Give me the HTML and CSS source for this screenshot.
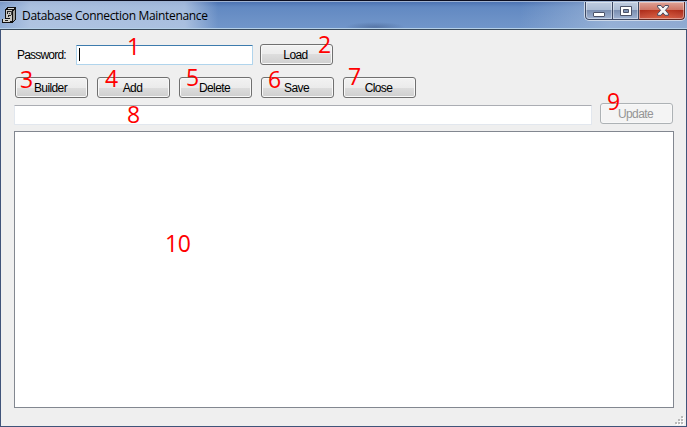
FILE: index.html
```
<!DOCTYPE html>
<html lang="en">
<head>
<meta charset="utf-8">
<title>Database Connection Maintenance</title>
<link rel="stylesheet" href="styles.css">
</head>
<body>
<div class="window">
  <header class="titlebar">
    <svg class="app-icon" width="16" height="17" viewBox="0 0 16 17" shape-rendering="crispEdges">
      <path d="M4 2L7 0H15V13L11 16H1V12H4Z" fill="#111"/>
      <path d="M5 3H11V14H9V11H5Z" fill="#c9c8c3"/>
      <path d="M6 2L8 1H14L12 2Z" fill="#ddd"/>
      <path d="M12 4L14 2V12L12 14Z" fill="#9b9b96"/>
      <path d="M6 4H10V5H7V7H6ZM7 8H10V9H8V10H7Z" fill="#222"/>
      <path d="M8 6H9V7H8ZM10 4H11V8H10Z" fill="#444"/>
      <path d="M2 12H9V15H2Z" fill="#d5d4ce"/>
      <path d="M4 13H7V14H4Z" fill="#222"/>
    </svg>
    <h1 class="title">Database Connection Maintenance</h1>
    <div class="controls">
      <div class="control min"><svg width="12" height="5"><rect x=".5" y=".5" width="11" height="4" rx=".5" fill="#fff" stroke="#4c5369"/></svg></div>
      <div class="control max"><svg width="12" height="10"><path fill-rule="evenodd" d="M.5 .5H11.5V9.5H.5ZM3.5 3.5V6.5H8.5V3.5Z" fill="#fff" stroke="#4c5369"/></svg></div>
      <div class="control close"><svg width="12" height="11" viewBox="0 0 12 11"><path d="M.6.5H4L6 3 8 .5H11.4V2L8.4 5.3 11.4 8.8V10.3H8L6 7.8 4 10.3H.6V8.8L3.6 5.3.6 2Z" fill="#f5f5f5" stroke="#4c4c61"/></svg></div>
    </div>
  </header>
  <main class="client">
    <div class="row login">
      <label class="label">Password:</label>
      <div class="field focused"><i class="caret"></i><b class="mark m1">1</b></div>
      <div class="button"><span>Load</span><b class="mark m2">2</b></div>
    </div>
    <div class="row actions">
      <div class="button"><span>Builder</span><b class="mark m3">3</b></div>
      <div class="button"><span>Add</span><b class="mark m4">4</b></div>
      <div class="button"><span>Delete</span><b class="mark m5">5</b></div>
      <div class="button"><span>Save</span><b class="mark m6">6</b></div>
      <div class="button"><span>Close</span><b class="mark m7">7</b></div>
    </div>
    <div class="row edit">
      <div class="field wide"><b class="mark m8">8</b></div>
      <div class="button disabled"><span>Update</span><b class="mark m9">9</b></div>
    </div>
    <div class="list"><b class="mark m10">10</b></div>
    <svg class="grip" width="10" height="10" shape-rendering="crispEdges">
      <path d="M7 1h2v2h-2zM4 4h2v2h-2zM7 4h2v2h-2zM1 7h2v2h-2zM4 7h2v2h-2zM7 7h2v2h-2z" fill="#fff"/>
      <path d="M6 0h2v2h-2zM3 3h2v2h-2zM6 3h2v2h-2zM0 6h2v2h-2zM3 6h2v2h-2zM6 6h2v2h-2z" fill="#b9b9b9"/>
    </svg>
  </main>
</div>
</body>
</html>
```
FILE: styles.css
```
* { box-sizing: border-box; }
body { margin: 0; overflow: hidden; background: #efefef; }
.window { width: 687px; height: 427px; display: flex; flex-direction: column; font: 12px "Open Sans", sans-serif; color: #000; }
.titlebar {
  height: 30px; flex: none; display: flex; align-items: flex-start; padding-left: 1px;
  border-top: 1px solid #0a0d20; border-bottom: 1px solid #3a4b5c;
  box-shadow: inset 0 1px #9fb3d2, inset 0 -1px #b5d0e8;
  background:
    radial-gradient(ellipse 30px 5px at 375px 26px, rgba(58,82,125,.45), transparent),
    linear-gradient(90deg, rgba(205,218,237,.35), rgba(205,218,237,.68) 30px, rgba(205,218,237,.62) 185px, transparent 218px),
    linear-gradient(90deg, transparent 520px, rgba(175,195,222,.6) 610px, rgba(165,185,215,.6)),
    linear-gradient(#486fb0 0, #6289c2 6px, #6d92c7 20px, #7196ca);
}
.app-icon { margin-top: 6px; flex: none; }
.title { margin: 5px 0 0 5px; font-size: 12px; line-height: 19px; font-weight: 400; white-space: nowrap; letter-spacing: -.32px; }
.controls { margin: 1px 1px 0 auto; height: 19px; display: flex; border: 1px solid #ccd8e9; border-top: 0; border-radius: 0 0 5px 5px; overflow: hidden; }
.control { display: flex; justify-content: center; align-items: center; height: 18px; border: 1px solid #3d4964; border-top: 0; box-shadow: inset 0 0 0 1px rgba(255,255,255,.4); }
.min, .max { background: linear-gradient(#bfcce0 0, #acbcd4 8px, #798daf 8px, #a0b3d2); }
.min { width: 28px; padding-top: 7px; border-radius: 0 0 0 4px; }
.max { width: 26px; border-left: 0; padding-top: 0; }
.close { width: 46px; border-color: #632923; border-left-width: 0; padding: 0 0 0 3px; border-radius: 0 0 4px 0; background: radial-gradient(ellipse at 50% 100%, rgba(255,120,70,.35), transparent 70%), linear-gradient(#dfa397 0, #cb7466 8px, #ad2b19 8px, #c95745); }
.client { flex: 1; display: flex; flex-direction: column; padding: 14px 12px 18px 13px; background: #efefef; border: 1px solid #40547a; border-top: 0; position: relative; }
.row { display: flex; flex: none; }
.login { height: 33px; }
.actions { height: 26px; gap: 9px; padding-left: 1px; }
.edit { height: 28px; justify-content: space-between; padding-right: 1px; }
.label { width: 62px; padding-left: 3px; font: 12px/22px "Liberation Sans", sans-serif; letter-spacing: -.8px; }
.field { position: relative; height: 20px; border: 1px solid #e2e7ee; border-top-color: #abadb3; background: #fff; border-radius: 1px; }
.focused { width: 177px; margin: 1px 7px 0 0; border-color: #b0d4ec; border-top-color: #3d7bad; }
.caret { display: block; width: 1px; height: 13px; margin: 2px 0 0 2px; background: #000; }
.wide { width: 578px; margin-top: 2px; }
.button { position: relative; width: 73px; height: 21px; border: 1px solid #707070; border-radius: 3px; background: linear-gradient(#f2f2f2 0, #ebebeb 50%, #dddddd 50%, #cfcfcf); box-shadow: inset 0 0 0 1px #f8f8f8; padding-right: 2px; text-align: center; font: 12px/21px "Liberation Sans", sans-serif; letter-spacing: -.6px; }
.disabled { border-color: #adb2b5; background: #f4f4f4; color: #959595; }
.list { position: relative; flex: 1; border: 1px solid #828790; background: #fff; }
.mark { position: absolute; font: 500 23px/24px "Open Sans", sans-serif; letter-spacing: -.5px; color: #f00; z-index: 2; }
.m1 { left: 50px; top: -12px; }
.m2 { left: 57px; top: -13px; }
.m3 { left: 4px; top: -11px; }
.m4 { left: 7px; top: -12px; }
.m5 { left: 6px; top: -13px; }
.m6 { left: 6px; top: -11px; }
.m7 { left: 4px; top: -14px; }
.m8 { left: 112px; top: -4px; }
.m9 { left: 6px; top: -15px; }
.m10 { left: 150px; top: 99px; }
.grip { position: absolute; right: 1px; bottom: 0; }
```
